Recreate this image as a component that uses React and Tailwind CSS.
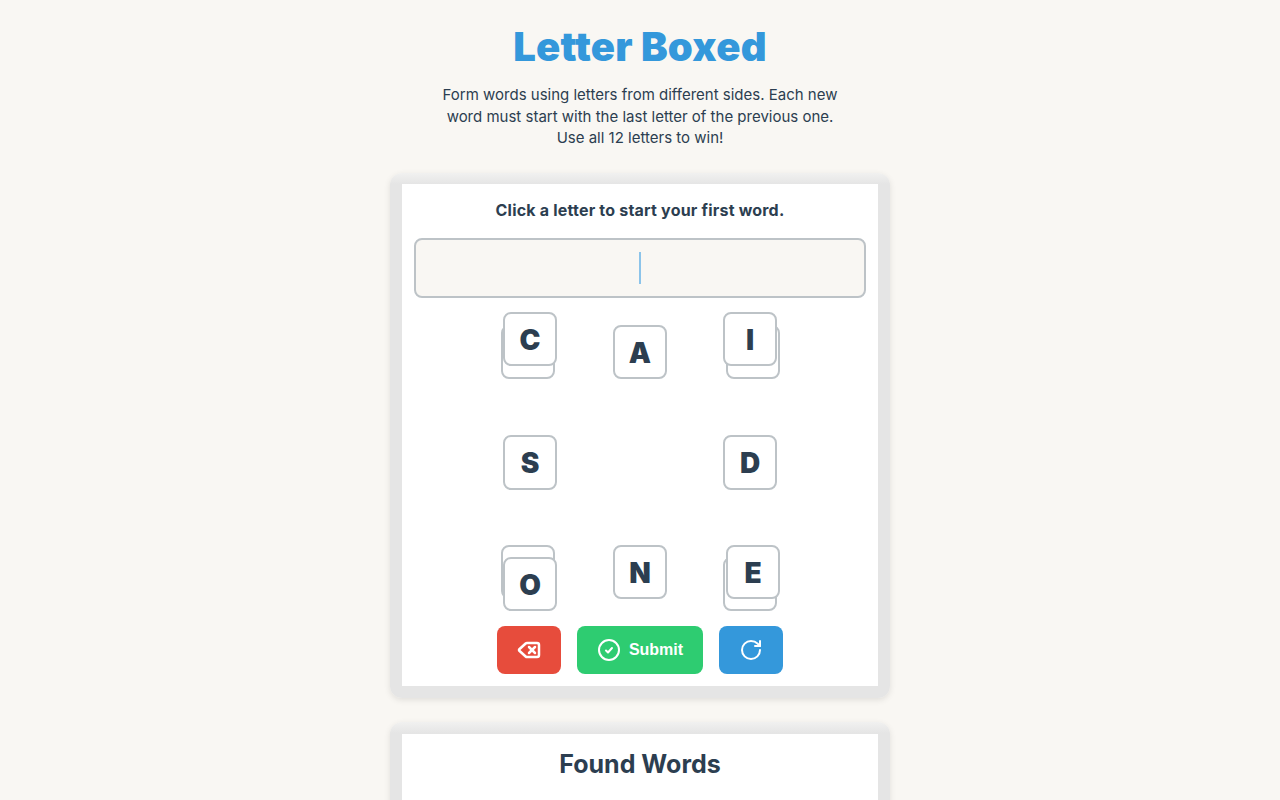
import React from "react";
import { Delete, RotateCw } from "lucide-react";

const Tile = ({ letter, className = "" }) => (
  <div
    className={`flex h-[54.4px] w-[54.4px] items-center justify-center rounded-lg border-2 border-[#bdc3c7] bg-white pt-0.5 text-[28px] font-black text-[#2c3e50] ${className}`}
  >
    {letter}
  </div>
);

const App = () => {
  return (
    <div className="min-h-screen bg-[#f9f7f3] pt-[21px] font-['Inter','Liberation_Sans',sans-serif] text-[#2c3e50]">
      <h1 className="text-center text-[40px] leading-[52px] font-black tracking-[0.2px] text-[#3498db]">
        Letter Boxed
      </h1>
      <p className="mx-auto mt-[11px] w-[420px] text-center text-[15px] leading-[21.6px]">
        Form words using letters from different sides. Each new word must start with the last letter of the previous one.
        <br />
        Use all 12 letters to win!
      </p>

      <div className="mx-auto mt-[24px] w-[500px] rounded-xl bg-[linear-gradient(#f1f1f0,#e5e5e5_11px)] px-3 pt-[11px] pb-3 shadow-[0_2px_6px_rgba(0,0,0,0.1)]">
        <div className="bg-white">
          <p className="pt-4 text-center text-[16px] leading-[21px] font-bold tracking-[0.2px]">
            Click a letter to start your first word.
          </p>
          <div className="mx-3 mt-[17px] flex h-[60px] items-center justify-center rounded-lg border-2 border-[#bdc3c7] bg-[#f9f7f3]">
            <div className="h-8 w-0.5 bg-[#8cc4ea]" />
          </div>

          <div className="mx-auto mt-[14px] grid w-[274.4px] grid-cols-[54.4px_54.4px_54.4px] justify-between">
            <div className="relative h-[67px]">
              <Tile className="absolute top-[13px] -left-0.5" />
              <Tile letter="C" className="absolute top-0 left-0" />
            </div>
            <div className="pt-[13px]">
              <Tile letter="A" />
            </div>
            <div className="relative h-[67px]">
              <Tile className="absolute top-[13px] left-[3px]" />
              <Tile letter="I" className="absolute top-0 left-0" />
            </div>

            <div className="mt-14">
              <Tile letter="S" />
            </div>
            <div />
            <div className="mt-14">
              <Tile letter="D" />
            </div>

            <div className="relative mt-[55px] h-[66px]">
              <Tile className="absolute top-0 -left-0.5" />
              <Tile letter="O" className="absolute top-3 left-0" />
            </div>
            <div className="mt-[55px]">
              <Tile letter="N" />
            </div>
            <div className="relative mt-[55px] h-[66px]">
              <Tile className="absolute top-3 left-0" />
              <Tile letter="E" className="absolute top-0 left-[3px]" />
            </div>
          </div>

          <div className="mt-[15px] flex justify-center gap-4 pb-3">
            <button className="flex h-12 w-16 items-center justify-center rounded-lg bg-[#e74c3c] text-white">
              <Delete size={24} strokeWidth={2.5} />
            </button>
            <button className="flex h-12 w-[126px] items-center justify-center gap-2 rounded-lg bg-[#2ecc71] font-['Liberation_Sans',sans-serif] text-base font-bold text-white">
              <svg width="24" height="24" viewBox="0 0 24 24" fill="none" stroke="currentColor" strokeWidth="2" strokeLinecap="round" strokeLinejoin="round">
                <circle cx="12" cy="12" r="10" />
                <path d="M9 12.5l2 2 4-4.5" />
              </svg>
              Submit
            </button>
            <button className="flex h-12 w-16 items-center justify-center rounded-lg bg-[#3498db] text-white">
              <RotateCw size={24} strokeWidth={2} />
            </button>
          </div>
        </div>
      </div>

      <div className="mx-auto mt-6 w-[500px] rounded-t-xl bg-[linear-gradient(#f1f1f0,#e5e5e5_11px)] px-3 pt-[12px] shadow-[0_2px_6px_rgba(0,0,0,0.1)]">
        <div className="bg-white pb-6">
          <h2 className="pt-[14px] text-center text-[25px] leading-8 font-bold">Found Words</h2>
        </div>
      </div>
    </div>
  );
};

export default App;
